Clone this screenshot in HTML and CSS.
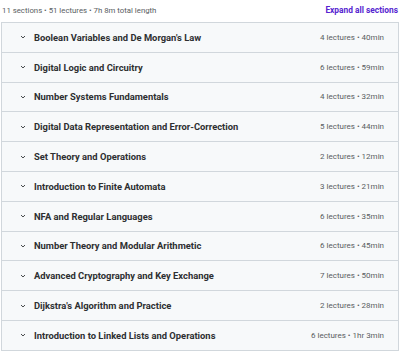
FILE: index.html
```html
<!DOCTYPE html>
<html lang="en">
<head>
    <meta charset="UTF-8">
    <title>Course content</title>
    <link rel="stylesheet" href="styles.css">
</head>
<body>
    <div class="curriculum">
        <div class="summary">
            <span class="stats">11 sections • 51 lectures • 7h 8m total length</span>
            <button class="expand">Expand all sections</button>
        </div>

        <div class="sections">
            <div class="section">
                <svg class="chevron" viewBox="0 0 10 10"><path d="M2.5 3.8 L5 6.2 L7.5 3.8"/></svg>
                <span class="title">Boolean Variables and De Morgan's Law</span>
                <span class="meta">4 lectures • 40min</span>
            </div>
            <div class="section">
                <svg class="chevron" viewBox="0 0 10 10"><path d="M2.5 3.8 L5 6.2 L7.5 3.8"/></svg>
                <span class="title">Digital Logic and Circuitry</span>
                <span class="meta">6 lectures • 59min</span>
            </div>
            <div class="section">
                <svg class="chevron" viewBox="0 0 10 10"><path d="M2.5 3.8 L5 6.2 L7.5 3.8"/></svg>
                <span class="title">Number Systems Fundamentals</span>
                <span class="meta">4 lectures • 32min</span>
            </div>
            <div class="section">
                <svg class="chevron" viewBox="0 0 10 10"><path d="M2.5 3.8 L5 6.2 L7.5 3.8"/></svg>
                <span class="title">Digital Data Representation and Error-Correction</span>
                <span class="meta">5 lectures • 44min</span>
            </div>
            <div class="section">
                <svg class="chevron" viewBox="0 0 10 10"><path d="M2.5 3.8 L5 6.2 L7.5 3.8"/></svg>
                <span class="title">Set Theory and Operations</span>
                <span class="meta">2 lectures • 12min</span>
            </div>
            <div class="section">
                <svg class="chevron" viewBox="0 0 10 10"><path d="M2.5 3.8 L5 6.2 L7.5 3.8"/></svg>
                <span class="title">Introduction to Finite Automata</span>
                <span class="meta">3 lectures • 21min</span>
            </div>
            <div class="section">
                <svg class="chevron" viewBox="0 0 10 10"><path d="M2.5 3.8 L5 6.2 L7.5 3.8"/></svg>
                <span class="title">NFA and Regular Languages</span>
                <span class="meta">6 lectures • 35min</span>
            </div>
            <div class="section">
                <svg class="chevron" viewBox="0 0 10 10"><path d="M2.5 3.8 L5 6.2 L7.5 3.8"/></svg>
                <span class="title">Number Theory and Modular Arithmetic</span>
                <span class="meta">6 lectures • 45min</span>
            </div>
            <div class="section">
                <svg class="chevron" viewBox="0 0 10 10"><path d="M2.5 3.8 L5 6.2 L7.5 3.8"/></svg>
                <span class="title">Advanced Cryptography and Key Exchange</span>
                <span class="meta">7 lectures • 50min</span>
            </div>
            <div class="section">
                <svg class="chevron" viewBox="0 0 10 10"><path d="M2.5 3.8 L5 6.2 L7.5 3.8"/></svg>
                <span class="title">Dijkstra's Algorithm and Practice</span>
                <span class="meta">2 lectures • 28min</span>
            </div>
            <div class="section">
                <svg class="chevron" viewBox="0 0 10 10"><path d="M2.5 3.8 L5 6.2 L7.5 3.8"/></svg>
                <span class="title">Introduction to Linked Lists and Operations</span>
                <span class="meta">6 lectures • 1hr 3min</span>
            </div>
        </div>
    </div>
</body>
</html>
```

FILE: styles.css
```css
* {
    margin: 0;
    padding: 0;
    box-sizing: border-box;
}
body {
    font-family: Roboto, "Noto Sans", sans-serif;
    background-color: #fff;
    color: #2d2f31;
    padding: 0 1px;
}
.summary {
    display: flex;
    justify-content: space-between;
    align-items: center;
    height: 22px;
    padding: 0 1px 2px 1px;
}
.stats {
    font-size: 7.8px;
    color: #595d61;
}
.expand {
    background: none;
    border: none;
    font-family: inherit;
    font-size: 8.4px;
    font-weight: 700;
    color: #5624d0;
    cursor: pointer;
}
.sections {
    border: 1px solid #d1d7dc;
    border-bottom: none;
}
.section {
    display: flex;
    align-items: center;
    height: 29.8px;
    padding: 0 14px 0 17px;
    background-color: #f7f9fa;
    border-bottom: 1px solid #d1d7dc;
}
.chevron {
    width: 8px;
    height: 8px;
    margin-right: 7px;
    fill: none;
    stroke: #3e4143;
    stroke-width: 1.2;
}
.title {
    flex: 1;
    font-size: 9.4px;
    font-weight: 700;
}
.meta {
    font-size: 8px;
    color: #595d61;
}
```
